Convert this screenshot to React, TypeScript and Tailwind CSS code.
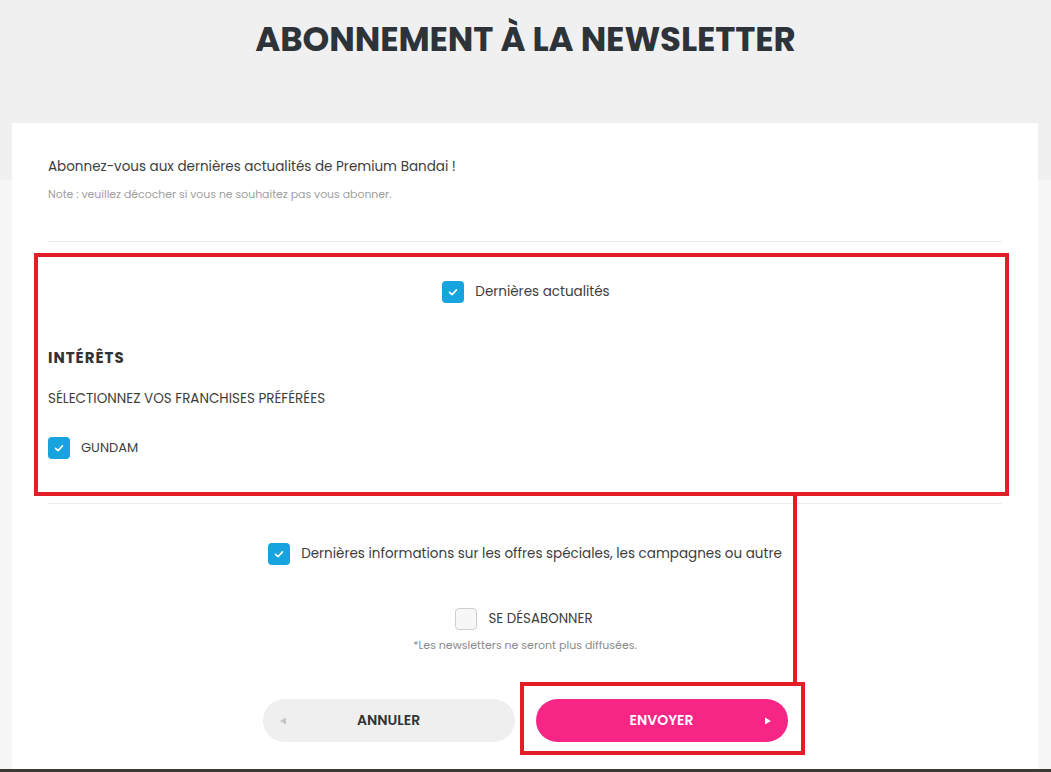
import { useState } from "react";

const FONT = "font-['Poppins','Inter','Open_Sans',sans-serif]";

function Check({ checked }: { checked: boolean }) {
  if (!checked) {
    return <span className="block h-[22px] w-[22px] shrink-0 rounded-[4px] border border-[#cfcfcf] bg-[#f7f7f7]" />;
  }
  return (
    <span className="flex h-[22px] w-[22px] shrink-0 items-center justify-center rounded-[4px] bg-[#17a3de]">
      <svg viewBox="0 0 16 16" className="h-[14px] w-[14px]" fill="none">
        <polyline points="4,8.4 6.9,11 12,5.6" stroke="#fff" strokeWidth="1.8" strokeLinecap="round" strokeLinejoin="round" />
      </svg>
    </span>
  );
}

function CheckRow({
  label,
  initial,
  className,
  textClass,
}: {
  label: string;
  initial: boolean;
  className?: string;
  textClass?: string;
}) {
  const [on, setOn] = useState(initial);
  return (
    <label className={"flex cursor-pointer items-center gap-[11px] " + (className ?? "")} onClick={() => setOn(!on)}>
      <Check checked={on} />
      <span className={textClass ?? "text-[13.5px] leading-[20px] text-[#3d3d3d]"}>{label}</span>
    </label>
  );
}

export default function App() {
  return (
    <div
      className={
        "relative h-[772px] w-[1051px] overflow-hidden bg-[linear-gradient(#f0f0f0_0,#f0f0f0_180px,#f7f7f7_180px)] " + FONT
      }
    >
      <header className="flex h-[123px] justify-center pt-[16px]">
        <h1 className="text-[34px] font-bold leading-[46px] tracking-[-0.1px] text-[#2d3338]">
          ABONNEMENT À LA NEWSLETTER
        </h1>
      </header>

      <main className="relative ml-[12px] h-[646px] w-[1026px] bg-white px-[36px] pt-[34px]">
        <p className="text-[13.5px] leading-[20px] text-[#3d3d3d]">
          Abonnez-vous aux dernières actualités de Premium Bandai !
        </p>
        <p className="mt-[10px] text-[10.9px] leading-[16px] text-[#a0a0a0]">
          Note : veuillez décocher si vous ne souhaitez pas vous abonner.
        </p>

        <div className="mt-[38px] h-px bg-[#ececec]" />

        <section className="-ml-[14px] -mr-[7px] mt-[11px] h-[243px] border-4 border-[#e31e26] pl-[10px] pr-[3px] pt-[24px]">
          <div className="flex justify-center pl-[2px]">
            <CheckRow label="Dernières actualités" initial />
          </div>
          <h2 className="mt-[45px] text-[15px] font-bold leading-[20px] tracking-[1px] text-[#333]">INTÉRÊTS</h2>
          <p className="mt-[22px] text-[13.5px] leading-[18px] text-[#3d3d3d]">SÉLECTIONNEZ VOS FRANCHISES PRÉFÉRÉES</p>
          <CheckRow
            label="GUNDAM"
            initial
            className="mt-[29px] w-fit gap-[10px]"
            textClass="text-[13px] leading-[20px] text-[#3d3d3d]"
          />
        </section>

        <div className="mt-[7px] h-px bg-[#ececec]" />

        <div className="mt-[39px] flex justify-center">
          <CheckRow label="Dernières informations sur les offres spéciales, les campagnes ou autre" initial />
        </div>

        <div className="mt-[43px] flex justify-center pr-[2px]">
          <CheckRow
            label="SE DÉSABONNER"
            initial={false}
            textClass="text-[13.4px] leading-[20px] text-[#3d3d3d]"
          />
        </div>
        <p className="mt-[8px] text-center text-[11px] leading-[14px] text-[#8a8a8a]">
          *Les newsletters ne seront plus diffusées.
        </p>

        <div className="mt-[47px] flex justify-center gap-[21px]">
          <button className="grid h-[43px] w-[252px] grid-cols-[20px_1fr_20px] items-center rounded-full bg-[#efefef] px-[16px] text-[14px] font-semibold text-[#333]">
            <svg viewBox="0 0 8 8" className="h-[8px] w-[8px] justify-self-start">
              <polygon points="7,0.5 7,7.5 1,4" fill="#c4c4c4" />
            </svg>
            <span>ANNULER</span>
            <span />
          </button>
          <button className="grid h-[43px] w-[252px] grid-cols-[20px_1fr_20px] items-center rounded-full bg-[#f72585] px-[16px] text-[14px] font-semibold text-white">
            <span />
            <span>ENVOYER</span>
            <svg viewBox="0 0 8 8" className="h-[8px] w-[8px] justify-self-end">
              <polygon points="1,0.5 1,7.5 7,4" fill="#fff" />
            </svg>
          </button>
        </div>

        {/* annotation overlays */}
        <div className="pointer-events-none absolute left-[781px] top-[373px] h-[190px] w-[4px] bg-[#e31e26]" />
        <div className="pointer-events-none absolute left-[508px] top-[559px] h-[73px] w-[285px] border-4 border-[#e31e26]" />
      </main>

      <footer className="h-[3px] bg-[#3c3a35]" />
    </div>
  );
}
